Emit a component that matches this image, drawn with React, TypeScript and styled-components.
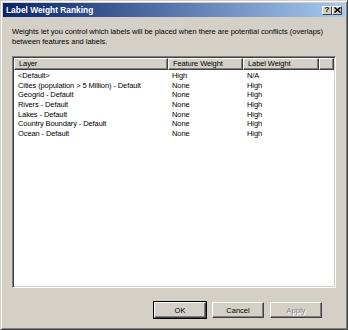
import React from "react";
import styled, { createGlobalStyle } from "styled-components";

const GlobalStyle = createGlobalStyle`
  html, body {
    margin: 0;
    padding: 0;
    background: #d4d0c8;
  }
  body {
    font-family: "Liberation Sans", Arial, sans-serif;
  }
`;

interface LayerRow {
  layer: string;
  feature: string;
  label: string;
}

const rows: LayerRow[] = [
  { layer: "<Default>", feature: "High", label: "N/A" },
  { layer: "Cities (population > 5 Million) - Default", feature: "None", label: "High" },
  { layer: "Geogrid - Default", feature: "None", label: "High" },
  { layer: "Rivers - Default", feature: "None", label: "High" },
  { layer: "Lakes - Default", feature: "None", label: "High" },
  { layer: "Country Boundary - Default", feature: "None", label: "High" },
  { layer: "Ocean - Default", feature: "None", label: "High" },
];

const columns = "154px 75px 76px 1fr";

function TitleButton({ kind }: { kind: "help" | "close" }) {
  return (
    <CaptionButton>
      {kind === "help" ? (
        <HelpMark>?</HelpMark>
      ) : (
        <svg width="7" height="6" viewBox="0 0 7 6">
          <path d="M0.5 0.5 L6.5 5.5 M6.5 0.5 L0.5 5.5" stroke="#000" strokeWidth="1.6" />
        </svg>
      )}
    </CaptionButton>
  );
}

export default function App() {
  return (
    <>
      <GlobalStyle />
      <Window>
        <TitleBar>
          <Title>Label Weight Ranking</Title>
          <CaptionButtons>
            <TitleButton kind="help" />
            <TitleButton kind="close" />
          </CaptionButtons>
        </TitleBar>
        <Body>
          <Description>
            Weights let you control which labels will be placed when there are potential conflicts (overlaps)
            <br />
            between features and labels.
          </Description>
          <ListBox>
            <HeaderRow>
              <HeaderCell>Layer</HeaderCell>
              <HeaderCell>Feature Weight</HeaderCell>
              <HeaderCell>Label Weight</HeaderCell>
              <HeaderCell />
            </HeaderRow>
            <Rows>
              {rows.map((r) => (
                <Row key={r.layer}>
                  <Cell>{r.layer}</Cell>
                  <Cell>{r.feature}</Cell>
                  <Cell>{r.label}</Cell>
                </Row>
              ))}
            </Rows>
          </ListBox>
          <ButtonBar>
            <Button $default>OK</Button>
            <Button>Cancel</Button>
            <Button disabled>Apply</Button>
          </ButtonBar>
        </Body>
      </Window>
    </>
  );
}

const Window = styled.div`
  width: 348px;
  height: 330px;
  box-sizing: border-box;
  background: #d4d0c8;
  border-top: 1px solid #d4d0c8;
  border-left: 1px solid #d4d0c8;
  border-right: 1px solid #404040;
  border-bottom: 1px solid #404040;
  box-shadow: inset 1px 1px 0 #fff, inset -1px -1px 0 #808080;
  padding: 2px;
  display: flex;
  flex-direction: column;
`;

const TitleBar = styled.div`
  height: 14px;
  background: linear-gradient(to right, #0a246a, #a6caf0);
  display: flex;
  align-items: center;
  justify-content: space-between;
  padding: 0 3px;
`;

const Title = styled.div`
  color: #fff;
  font-weight: bold;
  font-size: 8.4px;
`;

const CaptionButtons = styled.div`
  display: flex;
`;

const CaptionButton = styled.div`
  width: 10px;
  height: 9px;
  box-sizing: border-box;
  background: #d4d0c8;
  border-top: 1px solid #fff;
  border-left: 1px solid #fff;
  border-right: 1px solid #404040;
  border-bottom: 1px solid #404040;
  display: flex;
  align-items: center;
  justify-content: center;
`;

const HelpMark = styled.span`
  font-size: 8px;
  font-weight: bold;
  line-height: 1;
  color: #000;
`;

const Body = styled.div`
  flex: 1;
  display: flex;
  flex-direction: column;
  padding: 10px 9px 0 9px;
`;

const Description = styled.div`
  font-size: 7.5px;
  letter-spacing: -0.02px;
  line-height: 9.5px;
  color: #000;
  white-space: nowrap;
`;

const ListBox = styled.div`
  margin-top: 10px;
  height: 232px;
  box-sizing: border-box;
  background: #fff;
  border-top: 1px solid #808080;
  border-left: 1px solid #808080;
  border-right: 1px solid #fff;
  border-bottom: 1px solid #fff;
  box-shadow: inset 1px 1px 0 #404040, inset -1px -1px 0 #d4d0c8;
  padding: 1px;
  display: flex;
  flex-direction: column;
`;

const HeaderRow = styled.div`
  display: grid;
  grid-template-columns: ${columns};
  height: 12px;
`;

const HeaderCell = styled.div`
  background: #d4d0c8;
  box-sizing: border-box;
  border-top: 1px solid #fff;
  border-left: 1px solid #fff;
  border-right: 1px solid #404040;
  border-bottom: 1px solid #404040;
  box-shadow: inset -1px -1px 0 #808080;
  font-size: 7.5px;
  letter-spacing: -0.1px;
  line-height: 10px;
  padding-left: 4px;
  white-space: nowrap;
  overflow: hidden;
`;

const Rows = styled.div`
  padding-top: 1px;
`;

const Row = styled.div`
  display: grid;
  grid-template-columns: ${columns};
  height: 9.67px;
`;

const Cell = styled.div`
  font-size: 7.5px;
  letter-spacing: -0.1px;
  line-height: 9.67px;
  padding-left: 4px;
  white-space: nowrap;
`;

const ButtonBar = styled.div`
  display: flex;
  justify-content: flex-end;
  gap: 6px;
  margin-top: 14px;
  padding-right: 14px;
`;

const Button = styled.button<{ $default?: boolean }>`
  width: 52px;
  height: 16px;
  box-sizing: border-box;
  margin: 0;
  padding: 0;
  background: #d4d0c8;
  font-family: "Liberation Sans", Arial, sans-serif;
  font-size: 7.5px;
  color: #000;
  border-top: 1px solid #fff;
  border-left: 1px solid #fff;
  border-right: 1px solid #404040;
  border-bottom: 1px solid #404040;
  box-shadow: inset -1px -1px 0 #808080;
  outline: ${(p) => (p.$default ? "1px solid #000" : "none")};
  outline-offset: 0;

  &:disabled {
    color: #808080;
    text-shadow: 1px 1px 0 #fff;
  }
`;
